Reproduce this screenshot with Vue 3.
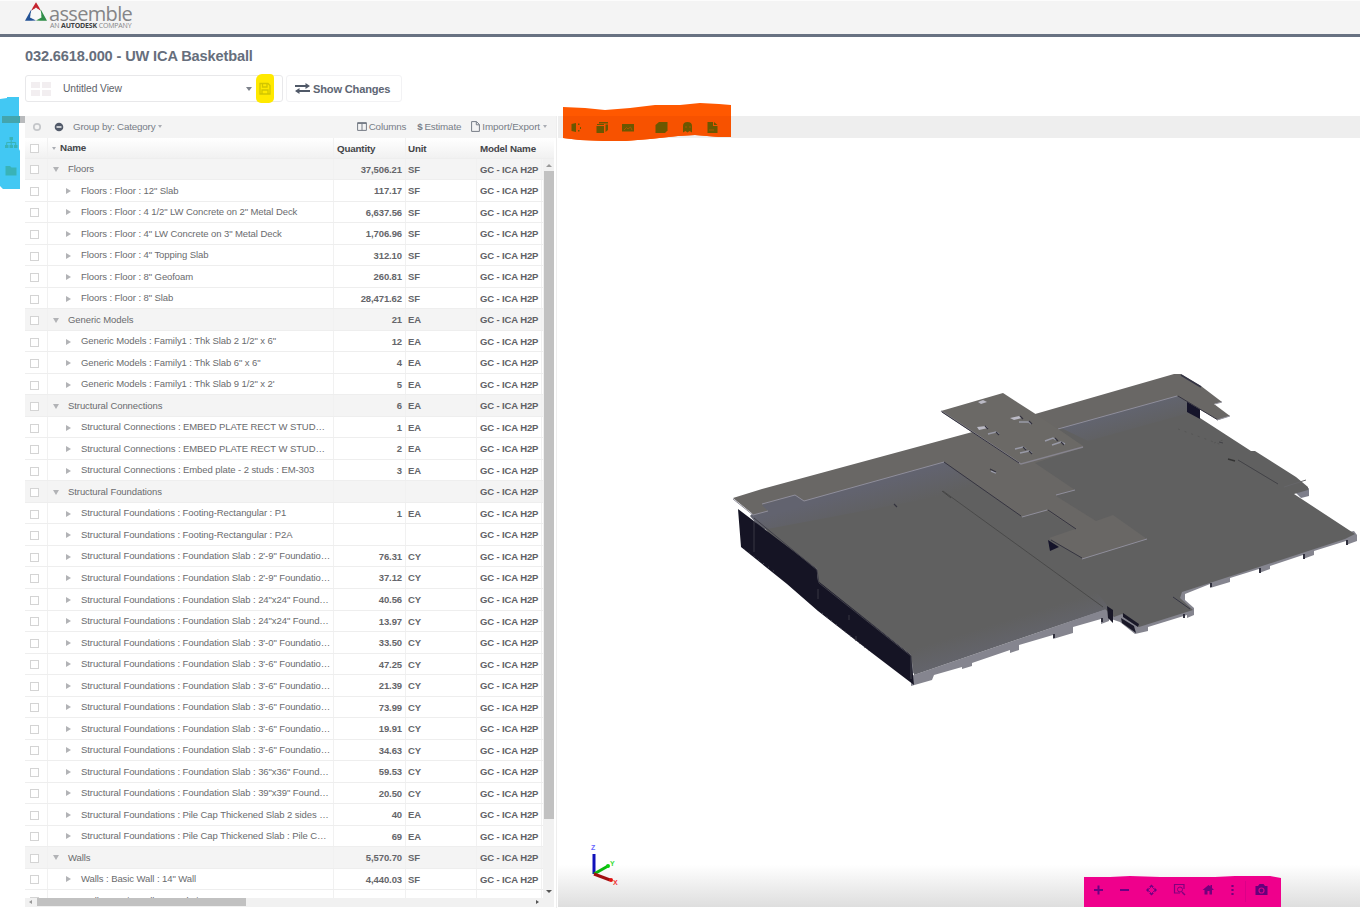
<script setup>
const M = 'GC - ICA H2P'
const SF = 'Structural Foundations : '
const source = [
  ['Floors', '37,506.21', 'SF', 1],
  ['Floors : Floor : 12" Slab', '117.17', 'SF'],
  ['Floors : Floor : 4 1/2" LW Concrete on 2" Metal Deck', '6,637.56', 'SF'],
  ['Floors : Floor : 4" LW Concrete on 3" Metal Deck', '1,706.96', 'SF'],
  ['Floors : Floor : 4" Topping Slab', '312.10', 'SF'],
  ['Floors : Floor : 8" Geofoam', '260.81', 'SF'],
  ['Floors : Floor : 8" Slab', '28,471.62', 'SF'],
  ['Generic Models', '21', 'EA', 1],
  ['Generic Models : Family1 : Thk Slab 2 1/2" x 6"', '12', 'EA'],
  ['Generic Models : Family1 : Thk Slab 6" x 6"', '4', 'EA'],
  ["Generic Models : Family1 : Thk Slab 9 1/2\" x 2'", '5', 'EA'],
  ['Structural Connections', '6', 'EA', 1],
  ['Structural Connections : EMBED PLATE RECT W STUD…', '1', 'EA'],
  ['Structural Connections : EMBED PLATE RECT W STUD…', '2', 'EA'],
  ['Structural Connections : Embed plate - 2 studs : EM-303', '3', 'EA'],
  ['Structural Foundations', '', '', 1],
  [SF + 'Footing-Rectangular : P1', '1', 'EA'],
  [SF + 'Footing-Rectangular : P2A', '', ''],
  [SF + "Foundation Slab : 2'-9\" Foundatio…", '76.31', 'CY'],
  [SF + "Foundation Slab : 2'-9\" Foundatio…", '37.12', 'CY'],
  [SF + 'Foundation Slab : 24"x24" Found…', '40.56', 'CY'],
  [SF + 'Foundation Slab : 24"x24" Found…', '13.97', 'CY'],
  [SF + "Foundation Slab : 3'-0\" Foundatio…", '33.50', 'CY'],
  [SF + "Foundation Slab : 3'-6\" Foundatio…", '47.25', 'CY'],
  [SF + "Foundation Slab : 3'-6\" Foundatio…", '21.39', 'CY'],
  [SF + "Foundation Slab : 3'-6\" Foundatio…", '73.99', 'CY'],
  [SF + "Foundation Slab : 3'-6\" Foundatio…", '19.91', 'CY'],
  [SF + "Foundation Slab : 3'-6\" Foundatio…", '34.63', 'CY'],
  [SF + 'Foundation Slab : 36"x36" Found…', '59.53', 'CY'],
  [SF + 'Foundation Slab : 39"x39" Found…', '20.50', 'CY'],
  [SF + 'Pile Cap Thickened Slab 2 sides …', '40', 'EA'],
  [SF + 'Pile Cap Thickened Slab : Pile C…', '69', 'EA'],
  ['Walls', '5,570.70', 'SF', 1],
  ['Walls : Basic Wall : 14" Wall', '4,440.03', 'SF'],
  ['Walls : Basic Wall : Foundation - 8"', '294.21', 'SF'],
]
const rows = source.map(([name, qty, unit, group]) => ({ name, qty, unit, group: !!group }))
</script>

<template>
  <div class="app">
    <header class="brand">
      <svg class="mark" width="24" height="22" viewBox="0 0 24 22">
        <path d="M8.500 7 12 1.200 15.500 7 16.500 10 12 6.500 7.500 10Z" fill="#c5242f" />
        <path d="M7.500 8 1 19.800 7 19.800 12 19.500 6 16.500 7 11Z" fill="#235295" />
        <path d="M16.500 8 23 19.800 16 19.800 12 19.500 17.500 16.500 16.800 11Z" fill="#2f8d48" />
        <circle cx="12" cy="13" r="5.300" fill="#f8f8f8" />
      </svg>
      <div class="wordmark">
        <div class="word">assemble</div>
        <div class="tag">AN <b>AUTODESK</b> COMPANY</div>
      </div>
    </header>

    <h1>032.6618.000 - UW ICA Basketball</h1>

    <div class="controls">
      <div class="view-select">
        <span class="tiles"><i /><i /><i /><i /></span>
        <span class="view-name">Untitled View</span>
        <span class="caret" />
        <span class="save">
          <svg width="12" height="13" viewBox="0 0 12 13" fill="none" stroke="#d2c600" stroke-width="1.300">
            <path d="M1 1.500H9L11 3.500V12H1ZM3.500 1.500V5H8V1.500M3 12V8H9V12" />
          </svg>
        </span>
      </div>
      <div class="changes">
        <svg width="15" height="11" viewBox="0 0 15 11">
          <path d="M0 3H11M4 8H15" stroke="#505968" stroke-width="1.900" />
          <path d="M10.500 0 15 3 10.500 6ZM4.500 5 0 8 4.500 11Z" fill="#505968" />
        </svg>
        <span>Show Changes</span>
      </div>
    </div>

    <main class="workspace">
      <nav class="rail">
        <svg width="25" height="94" viewBox="0 0 25 94">
          <path d="M0 2 7 1V0L19 0V52L20 54V92L3 92 0 89Z" fill="#42c8f3" />
          <path d="M2 19H20V26H2Z" fill="#43a5ad" />
          <path d="M20 19H25V26H20Z" fill="#b9bbbd" />
          <g fill="#39b3b7"><path d="M9.500 40H13V43H9.500ZM5 48H8.500V51H5ZM9.500 48H13V51H9.500ZM14 48H17.500V51H14Z" /><path d="M5.500 69H10L11.500 70.500H16.500V78.500H5.500Z" /></g>
          <path d="M11.200 43V48M6.700 48V45.500H15.700V48" fill="none" stroke="#39b3b7" />
        </svg>
      </nav>

      <section class="panel">
        <div class="toolbar">
          <svg class="ring" width="10" height="10" viewBox="0 0 10 10"><circle cx="5" cy="5" r="3.200" fill="none" stroke="#c5c7ca" stroke-width="1.700" /></svg>
          <svg class="minus" width="10" height="10" viewBox="0 0 10 10"><circle cx="5" cy="5" r="4.300" fill="#525a69" /><path d="M2.500 5H7.500" stroke="#fff" stroke-width="1.400" /></svg>
          <span class="group-by">Group by: Category</span><i class="chev" />
          <span class="tools">
            <span class="tool cols"><svg width="10" height="9" viewBox="0 0 10 9"><path d="M.6.600H9.400V8.400H.6ZM5 .6V8.400M.6 1.500H9.400" fill="none" stroke="#777d87" /></svg>Columns</span>
            <span class="tool est"><b>$</b>Estimate</span>
            <span class="tool imp"><svg width="9" height="11" viewBox="0 0 9 11"><path d="M.6.600H5.500L8.400 3.500V10.400H.6ZM5.300.600V3.800H8.400" fill="none" stroke="#777d87" /></svg>Import/Export<i class="chev" /></span>
          </span>
        </div>

        <div class="row head">
          <div class="c-check"><i class="box" /></div>
          <div class="c-name"><i class="chev" /><span>Name</span></div>
          <div class="c-qty">Quantity</div>
          <div class="c-unit">Unit</div>
          <div class="c-model">Model Name</div>
        </div>

        <div class="body">
          <div class="rows">
            <div v-for="(r, i) in rows" :key="i" class="row" :class="{ group: r.group }">
              <div class="c-check"><i class="box" /></div>
              <div class="c-name"><i class="tri" /><span>{{ r.name }}</span></div>
              <div class="c-qty">{{ r.qty }}</div>
              <div class="c-unit">{{ r.unit }}</div>
              <div class="c-model">{{ M }}</div>
            </div>
          </div>
          <div class="vscroll"><i class="up" /><i class="vthumb" /><i class="down" /></div>
        </div>
        <div class="hscroll"><i class="left" /><i class="hthumb" /><i class="right" /></div>
      </section>

      <section class="viewer">
        <div class="viewer-bar" />
        <div class="canvas">
          <svg width="802" height="769" viewBox="558 138 802 769">
            <defs>
              <linearGradient id="wall" x1="870" y1="486" x2="878" y2="514" gradientUnits="userSpaceOnUse"><stop offset="0" stop-color="#62636f" /><stop offset="1" stop-color="#606060" /></linearGradient>
              <linearGradient id="wall2" x1="1120" y1="412" x2="1127" y2="436" gradientUnits="userSpaceOnUse"><stop offset="0" stop-color="#62646f" /><stop offset="1" stop-color="#606060" /></linearGradient>
              <linearGradient id="front" x1="1000" y1="622" x2="1009" y2="651" gradientUnits="userSpaceOnUse"><stop offset="0" stop-color="#606060" /><stop offset="1" stop-color="#64656e" /></linearGradient>
            </defs>
            <!-- slab edges and footings -->
            <path d="M911 674 1105 610 1111 619 1120 622 1135 634 1148 631V627L1187 615V618L1194 615V608L1185 600V594L1210 584V588L1230 582V578L1259 569V573L1270 569V566L1303 555V559L1314 555V551L1346 541V545L1357 541V535L1354 531L1210 560 911 655Z" fill="#85858f" />
            <path d="M911 676V686L932 680 934 675 962 667V669L972 666V663L1010 650V653L1019 650V645L1053 635V639L1073 633V627L1101 619V624L1109 621V608Z" fill="#85858f" />
            <g stroke="#30303d" stroke-width="2"><path d="M1054 634V638M1102 618V622M1184 614V618M1211 583V587M1260 568V573M1304 554V559M1347 540V545" /></g>
            <!-- main floor -->
            <path d="M1296 493 1309 488V496L1301 498Z" fill="#7d7e8a" />
            <path d="M754 515 768 500 945 450 1060 425 1177 390 1200 418 1251 451 1255 451 1296 477 1308 487V490L1294 494 1355 534 1345 539 1182 592 1180 598 1193 610 1139 627 1122 614 1114 617 1105 609 914 673 911 655 818 582 817 569 770 535Z" fill="#606060" />
            <path d="M750 516 765 500 945 458 980 489 762 530Z" fill="url(#wall)" />
            <path d="M1055 425 1177 390 1200 410 1088 441Z" fill="url(#wall2)" />
            <path d="M911 646 1094 588 1109 608 914 675Z" fill="url(#front)" />
            <path d="M738 509 817 569 818 581 911 655 914 685 872 653 818 611 787 584 741 547Z" fill="#151424" />
            <path d="M754 518 817 570 819 583 911 656V679" fill="none" stroke="#41404a" />
            <path d="M754 521V552M818 589V599M849 615V620M856 636V641" stroke="#383643" fill="none" />
            <path d="M744 549 775 572M822 613 869 651" stroke="#5b5868" stroke-dasharray="1 5" />
            <path d="M943 491 1103 607" stroke="#494949" fill="none" />
            <path d="M942 491 951 498" stroke="#454545" />
            <path d="M1214 443 1226 439M1178 429 1222 445" stroke="#565656" stroke-dasharray="2 5" />
            <path d="M1238 460 1278 484M1219 442 1223 443" stroke="#424246" fill="none" />
            <path d="M1228 459 1235 461" stroke="#333" stroke-width="1.500" />
            <path d="M1284 487 1306 480" stroke="#666669" fill="none" />
            <path d="M1187 401 1200 409V419L1187 412Z" fill="#15142a" />
            <path d="M1048 540 1059 547 1050 551Z" fill="#15142a" />
            <!-- raised deck -->
            <path d="M733 498 762 489 976 431 1174 374 1181 374 1201 386 1222 402 1214 404 1230 416 1218 420 1177 396 1058 429 1084 447 1035 463 1075 490 1056 496 1096 521 1113 515 1147 539 1083 559 1049 538 1075 529 1047 511 1022 517 944 462 804 501 795 495 762 505 768 511 754 515Z" fill="#696765" />
            <path d="M733 499 753 515 768 511M762 504 795 495 804 501 944 462M1022 517 1047 510M1056 495 1075 490M1082 559 1147 539M1058 429 1177 396" fill="none" stroke="#8f8e9b" stroke-width="1" />
            <path d="M944 462 1021 516M1048 510 1076 529M1051 540 1082 558M1178 396 1218 420" fill="none" stroke="#353440" stroke-width="1" />
            <path d="M1181 375 1201 387" stroke="#343444" stroke-width="1.500" />
            <path d="M1217 420 1230 416M1215 404 1222 402" stroke="#9695a0" />
            <!-- upper plate -->
            <path d="M941 411 1003 393 1034 413 1058 429 1083 446 1021 464Z" fill="#6b6966" />
            <path d="M941 411 1021 464 1083 447" fill="none" stroke="#87858f" stroke-width="1.300" />
            <path d="M942 412 1019 463" stroke="#33323d" stroke-width="1" />
            <g fill="#bbbac5"><path d="M978 402 983 400 987 402 981 404ZM1010 418 1019 416 1022 418 1014 420ZM977 427 986 426 988 428 979 430Z" /></g>
            <path d="M988 434 996 432 999 434M1019 422 1029 422 1031 424M1015 449 1023 447 1026 449M1020 453 1029 451 1032 453M1045 441 1053 438 1056 440M1052 445 1061 442 1065 444M991 471 996 473" fill="none" stroke="#999aa7" stroke-width="1.400" />
            <path d="M985 426 988 429M996 432 999 435M1020 416 1023 419M1029 421 1032 424M1023 447 1026 450M1029 451 1032 454M1055 438 1058 441M1061 442 1064 445M990 469 996 472M894 504 897 507" stroke="#34333e" stroke-width="1.200" />
            <path d="M1123 613 1139 624 1138 627 1123 617ZM1107 606 1113 610V623L1108 618ZM1121 618 1134 626 1136 633 1122 623Z" fill="#191827" />
            <path d="M1173 597 1190 609" stroke="#343442" />
            <!-- axes -->
            <g fill="none" stroke-width="3"><path d="M594 874V854" stroke="#1011ba" /><path d="M594 874 608 866" stroke="#0bb90d" /><path d="M594 874 610 880" stroke="#a21111" /></g>
            <circle cx="608" cy="866" r="2" fill="#0bcf0d" /><circle cx="611" cy="880" r="2" fill="#df1111" />
            <g class="axis"><text x="591" y="850" fill="#6666ff">Z</text><text x="610" y="866" fill="#39dc39">Y</text><text x="613" y="885" fill="#f03434">X</text></g>
          </svg>
          <div class="nav-tools">
            <svg width="198" height="31" viewBox="1083 876 198 31">
              <path d="M1084 877H1110L1130 876 1160 877H1215L1235 876H1270L1281 878V907H1084Z" fill="#ef008c" />
              <g fill="none" stroke="#6c0083" stroke-width="2"><path d="M1094 890H1103M1098.500 885.500V894.500M1120 890H1129" /></g>
              <path d="M1151.500 884.500 1154 887H1149ZM1151.500 895.500 1154 893H1149ZM1146 890 1148.500 887.500V892.500ZM1157 890 1154.500 887.500V892.500Z" fill="#6c0083" />
              <path d="M1151.500 886.500 1155 890 1151.500 893.500 1148 890Z" fill="none" stroke="#8b0085" />
              <path d="M1180 893H1174.500V884.500H1184V889" fill="none" stroke="#82007f" stroke-width="1.200" /><circle cx="1180" cy="889.500" r="2.500" fill="none" stroke="#82007f" /><path d="M1182 892 1185 895" stroke="#82007f" stroke-width="1.500" />
              <path d="M1202.500 890 1208.500 885 1210.500 886.500V885H1212V888L1214 890H1212V894.500H1209.500V891H1207.500V894.500H1204.500V890Z" fill="#72007d" />
              <path d="M1232.500 885V887M1232.500 889V891M1232.500 893V895" stroke="#72007d" stroke-width="2.200" />
              <path d="M1245.500 881V902" stroke="#db0088" />
              <path d="M1255.500 886H1258L1259.500 884H1263.500L1265 886H1267.500V895H1255.500Z" fill="#65007b" /><circle cx="1261.500" cy="890.500" r="2.500" fill="none" stroke="#d8008b" stroke-width="1.200" />
            </svg>
          </div>
        </div>
        <div class="view-tools">
          <svg width="170" height="40" viewBox="562 102 170 40">
            <path d="M563 107 585 108 605 110 630 108 655 105 680 105 700 103 719 104 731 105V137H719L695 135 678 136 650 139 625 141H605L580 140 563 138Z" fill="#ff5800" />
            <path d="M563 116H731V137H719L695 135 678 136 650 139 625 141H605L580 140 563 138Z" fill="#f75200" />
            <g fill="#6b5700"><path d="M571.500 124 576 123V132L571.500 131ZM578 123.500H579.500V125H578ZM580 127H581V129H580ZM578 130H579.500V131.500H578Z" /><path d="M596.500 126H604V133H596.500ZM599 122H608V123.500H599ZM605.500 124.500H608V130L605.500 132ZM597 124H604V125H597Z" /><path d="M622 124H634V131.500H622Z" /><path d="M659 122H667.500V130.500L665 133H655.500V125Z" /><path d="M683 132.500V126Q683 122 687.500 122Q692 122 692 126V132.500L689.500 131 687.500 132.500 685.500 131Z" /><path d="M707.500 122H713V126H717.500V133H707.500ZM714 122 717.500 125H714Z" /></g>
            <path d="M624 130 626.500 127.500 628 129 630.500 127 632 130M685 127H687M689 127H691M709 130H714" fill="none" stroke="#a85600" />
          </svg>
        </div>
      </section>
    </main>
  </div>
</template>

<style>
body { margin: 0; background: #fff; overflow: hidden; }
</style>

<style scoped>
.app { width: 1360px; height: 908px; overflow: hidden; background: #fff; font-family: "Liberation Sans", Arial, sans-serif; color: #5b5d61; }
.brand { height: 37px; box-sizing: border-box; border-top: 1px solid #fcfcfc; border-bottom: 3px solid #687282; background: #f4f4f4; display: flex; padding-left: 24px; }
.wordmark { padding-left: 1px; }
.word { font: 20px/18px "Open Sans", sans-serif; letter-spacing: -.66px; color: #858587; margin-top: 4px; height: 17px; }
.tag { font: 7px/8px "Open Sans", sans-serif; letter-spacing: -.17px; white-space: nowrap; color: #858587; padding-left: 1px; }
.tag b { color: #3d3e41; }
h1 { margin: 0; box-sizing: border-box; padding: 10px 0 0 25px; height: 27px; font-size: 14.600px; letter-spacing: -.14px; line-height: 19px; color: #666e7c; white-space: nowrap; }
.controls { display: flex; height: 41px; padding: 0 0 0 25px; gap: 3px; }
.view-select, .changes { box-sizing: border-box; height: 27px; margin-top: 11px; border: 1px solid #e8e8ea; border-radius: 3px; display: flex; align-items: center; }
.view-select { width: 258px; padding-left: 5px; }
.tiles { width: 20px; display: grid; grid-template-columns: 1fr 1fr; gap: 2px; }
.tiles i { height: 6px; background: #f2eef0; }
.view-name { margin-left: 12px; font-size: 10.300px; letter-spacing: -.08px; width: 183px; color: #606268; }
.caret { border: 3px solid transparent; border-top: 4px solid #7d828b; border-bottom: 0; }
.save { width: 18px; height: 29px; margin-left: 4px; border-radius: 6px 4px 5px 5px; background: #ffe900; display: grid; place-items: center; }
.changes { width: 116px; padding-left: 8px; gap: 3px; font-size: 11.100px; letter-spacing: -.18px; font-weight: bold; color: #5e6674; white-space: nowrap; border-color: #f2f2f4; }
.workspace { display: flex; height: 803px; }
.rail { width: 25px; flex: none; margin-top: -8px; z-index: 1; }
.rail svg { display: block; }
.panel { width: 532px; flex: none; margin-top: 11px; border-right: 1px solid #eee; box-sizing: border-box; font-size: 9.500px; letter-spacing: -.08px; }
.toolbar { height: 21.500px; background: #f4f4f4; display: flex; align-items: center; font-size: 9.800px; letter-spacing: -.17px; color: #777d87; padding-left: 7px; white-space: nowrap; }
.minus { margin-left: 12px; }
.group-by { margin-left: 9px; }
.chev { display: inline-block; border: 2.500px solid transparent; border-top: 3px solid #aaadb3; border-bottom: 0; margin-left: 3px; vertical-align: middle; }
.tools { margin-left: auto; display: flex; padding-right: 9px; }
.tool { display: inline-flex; align-items: center; gap: 2px; }
.tool .chev { margin-left: 1px; }
.est { margin-left: 11px; }
.imp { margin-left: 10px; letter-spacing: -.08px; }
.row { display: flex; height: 21.530px; box-sizing: border-box; border-bottom: 1px solid #eee; color: #6a6b6e; white-space: nowrap; line-height: 20.500px; }
.row > div { box-sizing: border-box; border-right: 1px solid #f1f1f1; flex: none; padding-top: 1px; }
.row.group { background: #f4f4f4; }
.c-check { width: 23px; display: flex; align-items: center; padding-left: 5px; }
.box { width: 7px; height: 7px; margin-top: 1px; border: 1px solid #d4d4d4; background: #fff; }
.c-name { width: 286px; padding-left: 18px; display: flex; align-items: center; }
.c-name .tri { width: 0; height: 0; border: 3px solid transparent; border-left: 5px solid #b2b3b6; border-right: 0; margin-right: 10px; }
.group .c-name { padding-left: 5px; }
.group .c-name .tri { border: 3px solid transparent; border-top: 5px solid #b2b3b6; border-bottom: 0; margin-right: 9px; }
.row .c-qty { width: 72px; text-align: right; padding-right: 3px; font-weight: bold; color: #65666a; letter-spacing: -.1px; }
.row .c-unit { width: 71px; padding-left: 2px; font-weight: bold; color: #65666a; }
.row .c-model { width: 65px; padding-left: 3px; font-weight: bold; color: #606165; overflow: hidden; letter-spacing: -.13px; }
.head { height: 21.200px; background: linear-gradient(#fff, #f1f1f1); font-weight: bold; width: 529px; font-size: 9.800px; letter-spacing: -.18px; }
.head .c-name { padding-left: 1px; color: #444549; }
.head .c-name span { margin-left: 4px; }
.head .c-qty { text-align: left; padding-left: 3px; color: #444549; letter-spacing: -.18px; }
.head .c-unit, .head .c-model { color: #444549; overflow: visible; border-right-color: transparent; letter-spacing: -.18px; }
.body { height: 739.300px; display: flex; overflow: hidden; }
.rows { width: 518px; flex: none; }
.vscroll { width: 11px; background: #f1f1f1; display: flex; flex-direction: column; align-items: center; }
.up { border: 3px solid transparent; border-bottom: 3px solid #999; border-top: 0; margin: 5px 0 4px; }
.vthumb { width: 10px; height: 648px; background: #c1c1c1; }
.down { border: 3px solid transparent; border-top: 3px solid #555; border-bottom: 0; margin-top: 71px; }
.hscroll { height: 9px; background: #f1f1f1; display: flex; align-items: center; width: 529px; }
.left { border: 2.500px solid transparent; border-right: 3px solid #999; border-left: 0; margin: 0 5px 0 4px; }
.hthumb { width: 209px; height: 8px; background: #c1c1c1; }
.right { margin-left: auto; margin-right: 15px; border: 2.500px solid transparent; border-left: 3px solid #555; border-right: 0; }
.viewer { position: relative; margin-top: 11px; width: 802px; margin-left: 1px; flex: none; }
.viewer-bar { height: 22px; background: #eee; }
.canvas { height: 769px; background: linear-gradient(#fff 0, #fff 94.500%, #dedede 100%); position: relative; }
.canvas > svg { display: block; }
.axis { font: bold 7px "Liberation Sans", sans-serif; }
.nav-tools { position: absolute; left: 525px; bottom: 0; }
.nav-tools svg, .view-tools svg { display: block; }
.view-tools { position: absolute; left: 4px; top: -14px; }
</style>
